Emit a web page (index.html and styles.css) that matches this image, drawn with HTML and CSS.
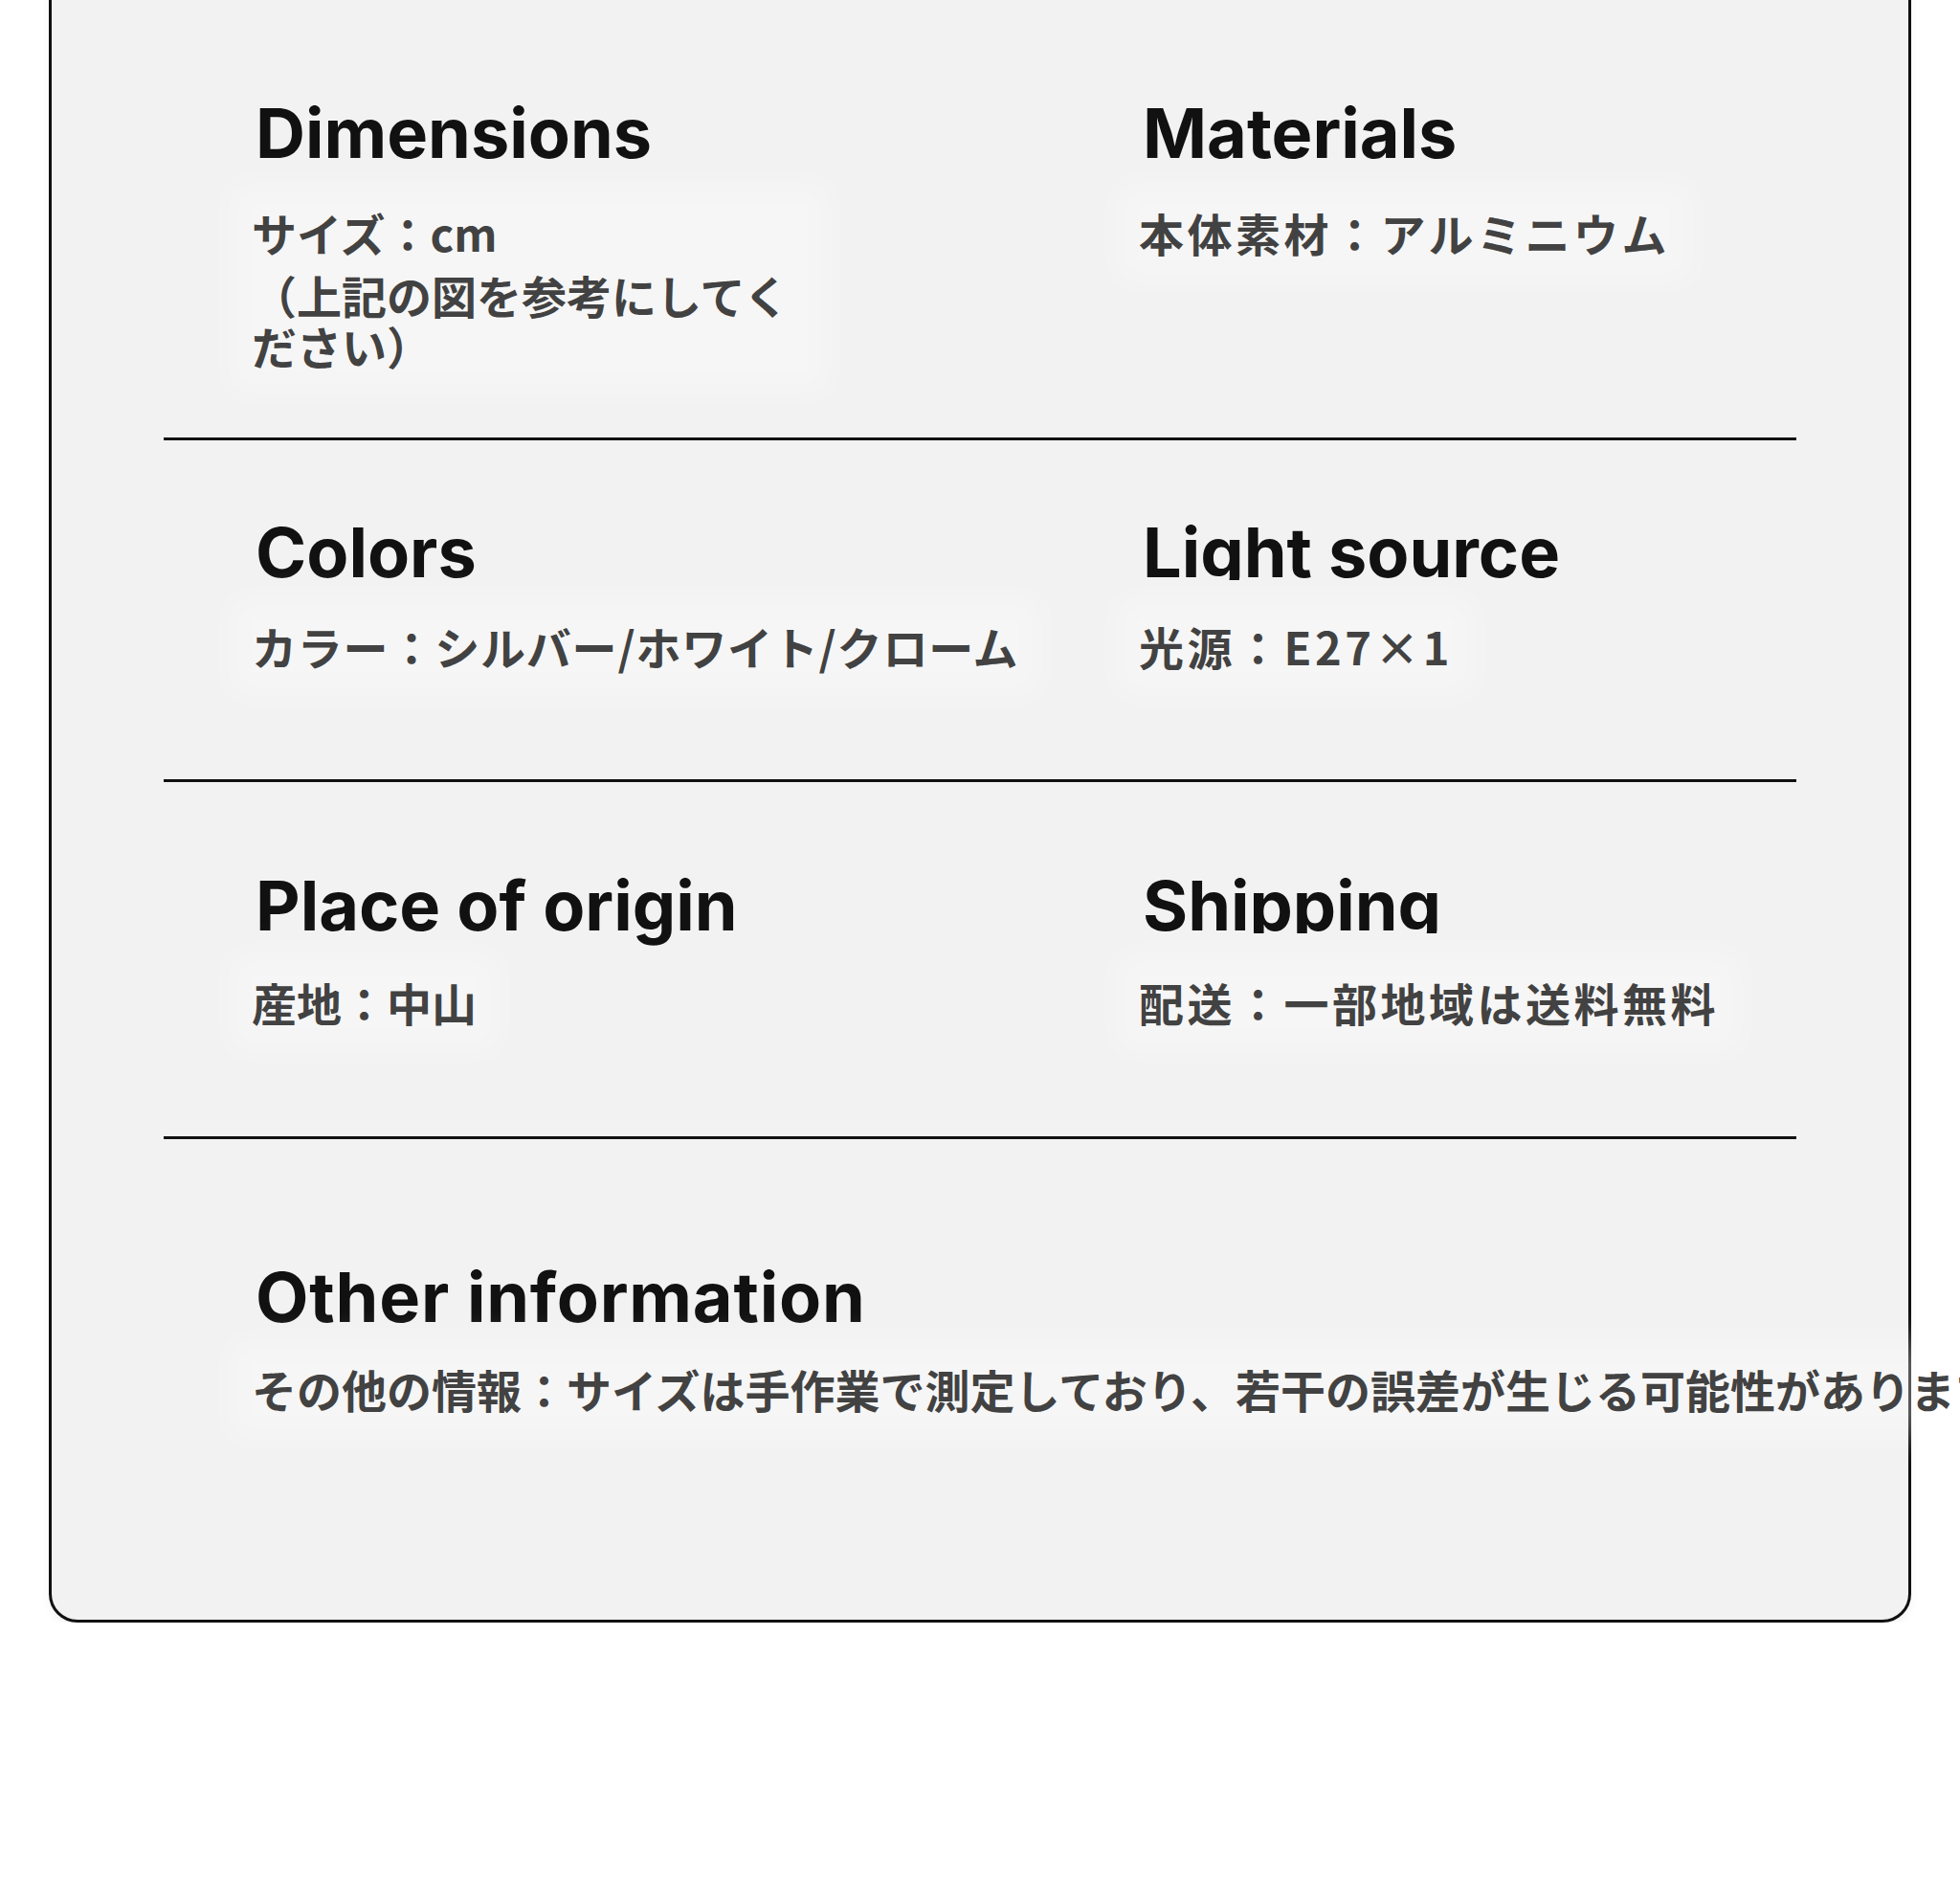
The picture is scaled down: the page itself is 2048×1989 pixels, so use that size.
FILE: index.html
```html
<!DOCTYPE html>
<html lang="ja">
<head>
<meta charset="utf-8">
<title>Specifications</title>
<link rel="stylesheet" href="styles.css">
</head>
<body>
<div class="card">
  <section class="spec-row divided row-1">
    <div class="spec-grid">
      <div class="spec">
        <h2 class="spec-title">Dimensions</h2>
        <div class="spec-body">
          <p class="spec-value">サイズ：cm</p>
          <p class="spec-value spec-value--note">（上記の図を参考にしてください）</p>
        </div>
      </div>
      <div class="spec">
        <h2 class="spec-title">Materials</h2>
        <div class="spec-body">
          <p class="spec-value spec-value--spaced">本体素材：アルミニウム</p>
        </div>
      </div>
    </div>
  </section>
  <section class="spec-row divided row-2">
    <div class="spec-grid">
      <div class="spec">
        <h2 class="spec-title">Colors</h2>
        <div class="spec-body">
          <p class="spec-value spec-value--loose">カラー：シルバー/ホワイト/クローム</p>
        </div>
      </div>
      <div class="spec">
        <h2 class="spec-title spec-title--clipped">Light source</h2>
        <div class="spec-body">
          <p class="spec-value spec-value--spaced">光源：E27×1</p>
        </div>
      </div>
    </div>
  </section>
  <section class="spec-row divided row-3">
    <div class="spec-grid">
      <div class="spec">
        <h2 class="spec-title">Place of origin</h2>
        <div class="spec-body">
          <p class="spec-value">産地：中山</p>
        </div>
      </div>
      <div class="spec">
        <h2 class="spec-title spec-title--clipped">Shipping</h2>
        <div class="spec-body">
          <p class="spec-value spec-value--spaced">配送：一部地域は送料無料</p>
        </div>
      </div>
    </div>
  </section>
  <section class="spec-row row-4">
    <div class="spec">
      <h2 class="spec-title spec-title--wide">Other information</h2>
      <div class="spec-body">
        <p class="spec-value">その他の情報：サイズは手作業で測定しており、若干の誤差が生じる可能性があります。</p>
      </div>
    </div>
  </section>
</div>
</body>
</html>
```
FILE: styles.css
```css
* {
  box-sizing: border-box;
}

html,
body {
  margin: 0;
  padding: 0;
  background: #ffffff;
  overflow-x: hidden;
}

body {
  font-family: "Noto Sans CJK JP", "Noto Sans", sans-serif;
}

.card {
  width: 1946px;
  margin: -40px 0 0 51px;
  padding: 0 117px;
  background: #f2f2f2;
  border: 3px solid #111111;
  border-radius: 30px;
  box-shadow: 0 4px 10px rgba(0, 0, 0, 0.05);
}

.spec-row {
  padding-left: 92px;
}

.spec-row.divided {
  border-bottom: 3px solid #111111;
}

.row-1 {
  padding-top: 140px;
  padding-bottom: 70px;
  --gap: 40px;
}

.row-2 {
  padding-top: 81px;
  padding-bottom: 111px;
  --gap: 34px;
}

.row-3 {
  padding-top: 93px;
  padding-bottom: 112px;
  --gap: 37px;
}

.row-4 {
  padding-top: 129px;
  padding-bottom: 213px;
  --gap: 32px;
}

.spec-grid {
  display: grid;
  grid-template-columns: 927px 1fr;
}

.spec {
  display: flex;
  flex-direction: column;
  align-items: flex-start;
  gap: var(--gap);
}

.spec-title {
  margin: 0 0 0 4px;
  font-family: Inter, "Liberation Sans", sans-serif;
  font-weight: 700;
  font-size: 72px;
  line-height: 72px;
  color: #111111;
  white-space: nowrap;
}

.spec-title--clipped {
  clip-path: inset(0 0 7px 0);
}

.spec-title--wide {
  letter-spacing: 0.8px;
}

.spec-body {
  display: flex;
  flex-direction: column;
  gap: 10px;
  background: rgba(255, 255, 255, 0.3);
  box-shadow: 0 0 30px 24px rgba(255, 255, 255, 0.3);
}

.spec-value {
  margin: 0;
  font-family: "Noto Sans CJK JP", "Noto Sans", sans-serif;
  font-weight: 700;
  font-size: 47px;
  line-height: 56px;
  color: #424242;
  white-space: nowrap;
}

.spec-value--note {
  white-space: normal;
  max-width: 580px;
  line-height: 53px;
}

.spec-value--spaced {
  letter-spacing: 3.5px;
}

.spec-value--loose {
  letter-spacing: 0.8px;
}
```
